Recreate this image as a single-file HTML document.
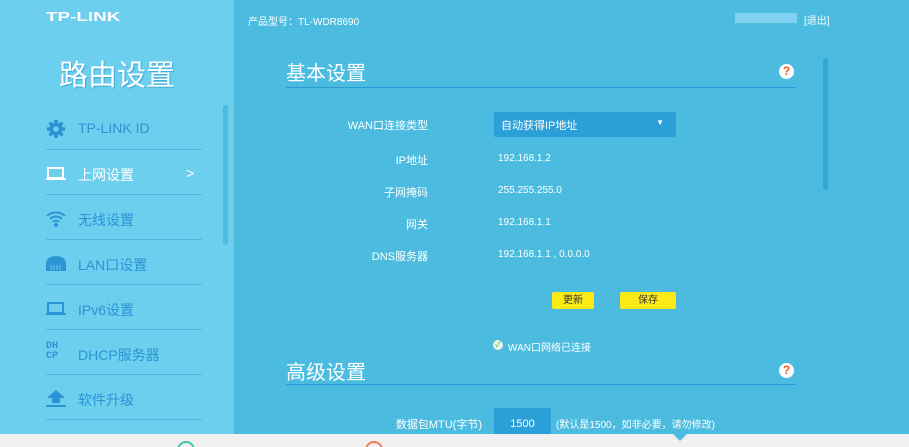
<!DOCTYPE html><html><head><meta charset="utf-8"><style>
*{margin:0;padding:0;box-sizing:border-box}
html,body{width:909px;height:447px;overflow:hidden}
body{position:relative;background:#4bbce0;font-family:"Liberation Sans","Noto Sans CJK SC",sans-serif;color:#fff}
.a{position:absolute;white-space:nowrap}
#side{position:absolute;left:0;top:0;width:234px;height:434px;background:#6dcfee}
.it{position:absolute;left:46px;width:156px;height:45px;border-bottom:1px solid #4cb7e2;color:#2a94d4;font-size:14px}
.it span{position:absolute;left:32px;top:15px}
.it svg{position:absolute;left:0;top:14px}
.lbl{position:absolute;font-size:11px;text-align:right;width:200px;left:228px}
.val{position:absolute;font-size:10px;left:498px}
</style></head><body>
<div id="side">
<div class="a" style="left:46px;top:9px;font-size:13px;font-weight:bold;transform:scaleX(1.45);transform-origin:left">TP-LINK</div>
<div class="a" style="left:59px;top:52px;font-size:29px;text-shadow:1px 1px 1px #3aa8d5">路由设置</div>
<div class="it" style="top:105px"><svg width="20" height="20" viewBox="0 0 20 20"><circle cx="10" cy="10" r="6.5" fill="#2a94d4"/><g stroke="#2a94d4" stroke-width="3.5"><path d="M10 1v18M1 10h18M3.6 3.6l12.8 12.8M16.4 3.6L3.6 16.4"/></g><circle cx="10" cy="10" r="2.8" fill="#6dcfee"/></svg><span>TP-LINK ID</span></div>
<div class="it" style="top:150px;color:#fff"><svg width="20" height="20" viewBox="0 0 20 20"><rect x="2" y="4" width="15" height="10" fill="none" stroke="#fff" stroke-width="2"/><rect x="0" y="14" width="20" height="2" fill="#fff"/></svg><span>上网设置</span><span style="left:140px">&gt;</span></div>
<div class="it" style="top:195px"><svg width="20" height="20" viewBox="0 0 20 20" fill="none" stroke="#2a94d4" stroke-width="2"><path d="M1 7a13 13 0 0 1 18 0M4 10a8.5 8.5 0 0 1 12 0M7 13a4 4 0 0 1 6 0"/><circle cx="10" cy="16" r="1" fill="#2a94d4"/></svg><span>无线设置</span></div>
<div class="it" style="top:240px"><svg width="20" height="20" viewBox="0 0 20 20"><path d="M0 17V9a10 7 0 0 1 20 0v8z" fill="#2a94d4"/><path d="M5 11v5M8 11v5M11 11v5M14 11v5" stroke="#6dcfee"/></svg><span>LAN口设置</span></div>
<div class="it" style="top:285px"><svg width="20" height="20" viewBox="0 0 20 20"><rect x="2" y="4" width="15" height="10" fill="none" stroke="#2a94d4" stroke-width="2"/><rect x="0" y="14" width="20" height="2" fill="#2a94d4"/></svg><span>IPv6设置</span></div>
<div class="it" style="top:330px"><div class="a" style="left:0;top:12px;font-size:10px;font-weight:bold;line-height:10px;font-family:'Liberation Mono',monospace">DH<br>CP</div><span>DHCP服务器</span></div>
<div class="it" style="top:375px"><svg width="20" height="20" viewBox="0 0 20 20" fill="#2a94d4"><path d="M10 1l9 8h-5v5H6V9H1z"/><rect x="0" y="16" width="20" height="2"/></svg><span>软件升级</span></div>
<div class="a" style="left:223px;top:105px;width:5px;height:140px;background:#4cbbe2;border-radius:3px"></div>
</div>
<div class="a" style="left:248px;top:13px;font-size:10px">产品型号：TL-WDR8690</div>
<div class="a" style="left:735px;top:13px;width:62px;height:10px;background:#7fd1ee"></div>
<div class="a" style="left:804px;top:12px;font-size:10px">[退出]</div>
<div class="a" style="left:823px;top:58px;width:5px;height:132px;background:#37a6da;border-radius:3px"></div>
<div class="a" style="left:286px;top:57px;font-size:20px">基本设置</div>
<div class="a" style="left:286px;top:87px;width:510px;height:1px;background:#2a9ad6"></div>
<div class="a" style="left:779px;top:64px;width:15px;height:15px;border-radius:50%;background:#fff;color:#f05a28;font-size:12px;font-weight:bold;text-align:center;line-height:15px">?</div>
<div class="lbl" style="top:117px">WAN口连接类型</div>
<div class="a" style="left:494px;top:112px;width:182px;height:25px;background:#2ba0d8;border-radius:2px;font-size:11px;padding:5px 7px">自动获得IP地址<span style="position:absolute;right:12px;top:6px;font-size:8px">▼</span></div>
<div class="lbl" style="top:152px">IP地址</div><div class="val" style="top:153px">192.168.1.2</div>
<div class="lbl" style="top:184px">子网掩码</div><div class="val" style="top:185px">255.255.255.0</div>
<div class="lbl" style="top:216px">网关</div><div class="val" style="top:217px">192.168.1.1</div>
<div class="lbl" style="top:248px">DNS服务器</div><div class="val" style="top:249px">192.168.1.1 , 0.0.0.0</div>
<div class="a" style="left:552px;top:292px;width:42px;height:17px;background:#fcea17;border-radius:2px;color:#333;font-size:10px;text-align:center;line-height:17px">更新</div>
<div class="a" style="left:620px;top:292px;width:56px;height:17px;background:#fcea17;border-radius:2px;color:#333;font-size:10px;text-align:center;line-height:17px">保存</div>
<div class="a" style="left:493px;top:340px;width:10px;height:10px;border-radius:50%;background:#e8f5e8;color:#3bb34a;font-size:8px;text-align:center;line-height:10px">✓</div>
<div class="a" style="left:508px;top:339px;font-size:10px">WAN口网络已连接</div>
<div class="a" style="left:286px;top:356px;font-size:20px">高级设置</div>
<div class="a" style="left:286px;top:384px;width:510px;height:1px;background:#2a9ad6"></div>
<div class="a" style="left:779px;top:363px;width:15px;height:15px;border-radius:50%;background:#fff;color:#f05a28;font-size:12px;font-weight:bold;text-align:center;line-height:15px">?</div>
<div class="lbl" style="top:416px;left:282px">数据包MTU(字节)</div>
<div class="a" style="left:494px;top:408px;width:57px;height:26px;background:#2ba0d8;font-size:11px;text-align:center;padding-top:10px">1500</div>
<div class="a" style="left:556px;top:416px;font-size:10px">(默认是1500，如非必要，请勿修改)</div>
<div class="a" style="left:0;top:434px;width:909px;height:13px;background:#f0f0f0;overflow:hidden">
<div class="a" style="left:177px;top:7px;width:18px;height:18px;border-radius:50%;border:2px solid #3ec7a7"></div>
<div class="a" style="left:365px;top:7px;width:18px;height:18px;border-radius:50%;border:2px solid #f07b5a"></div>
<div class="a" style="left:673px;top:0;width:0;height:0;border-left:7px solid transparent;border-right:7px solid transparent;border-top:7px solid #4bbce0"></div>
</div>
</body></html>
